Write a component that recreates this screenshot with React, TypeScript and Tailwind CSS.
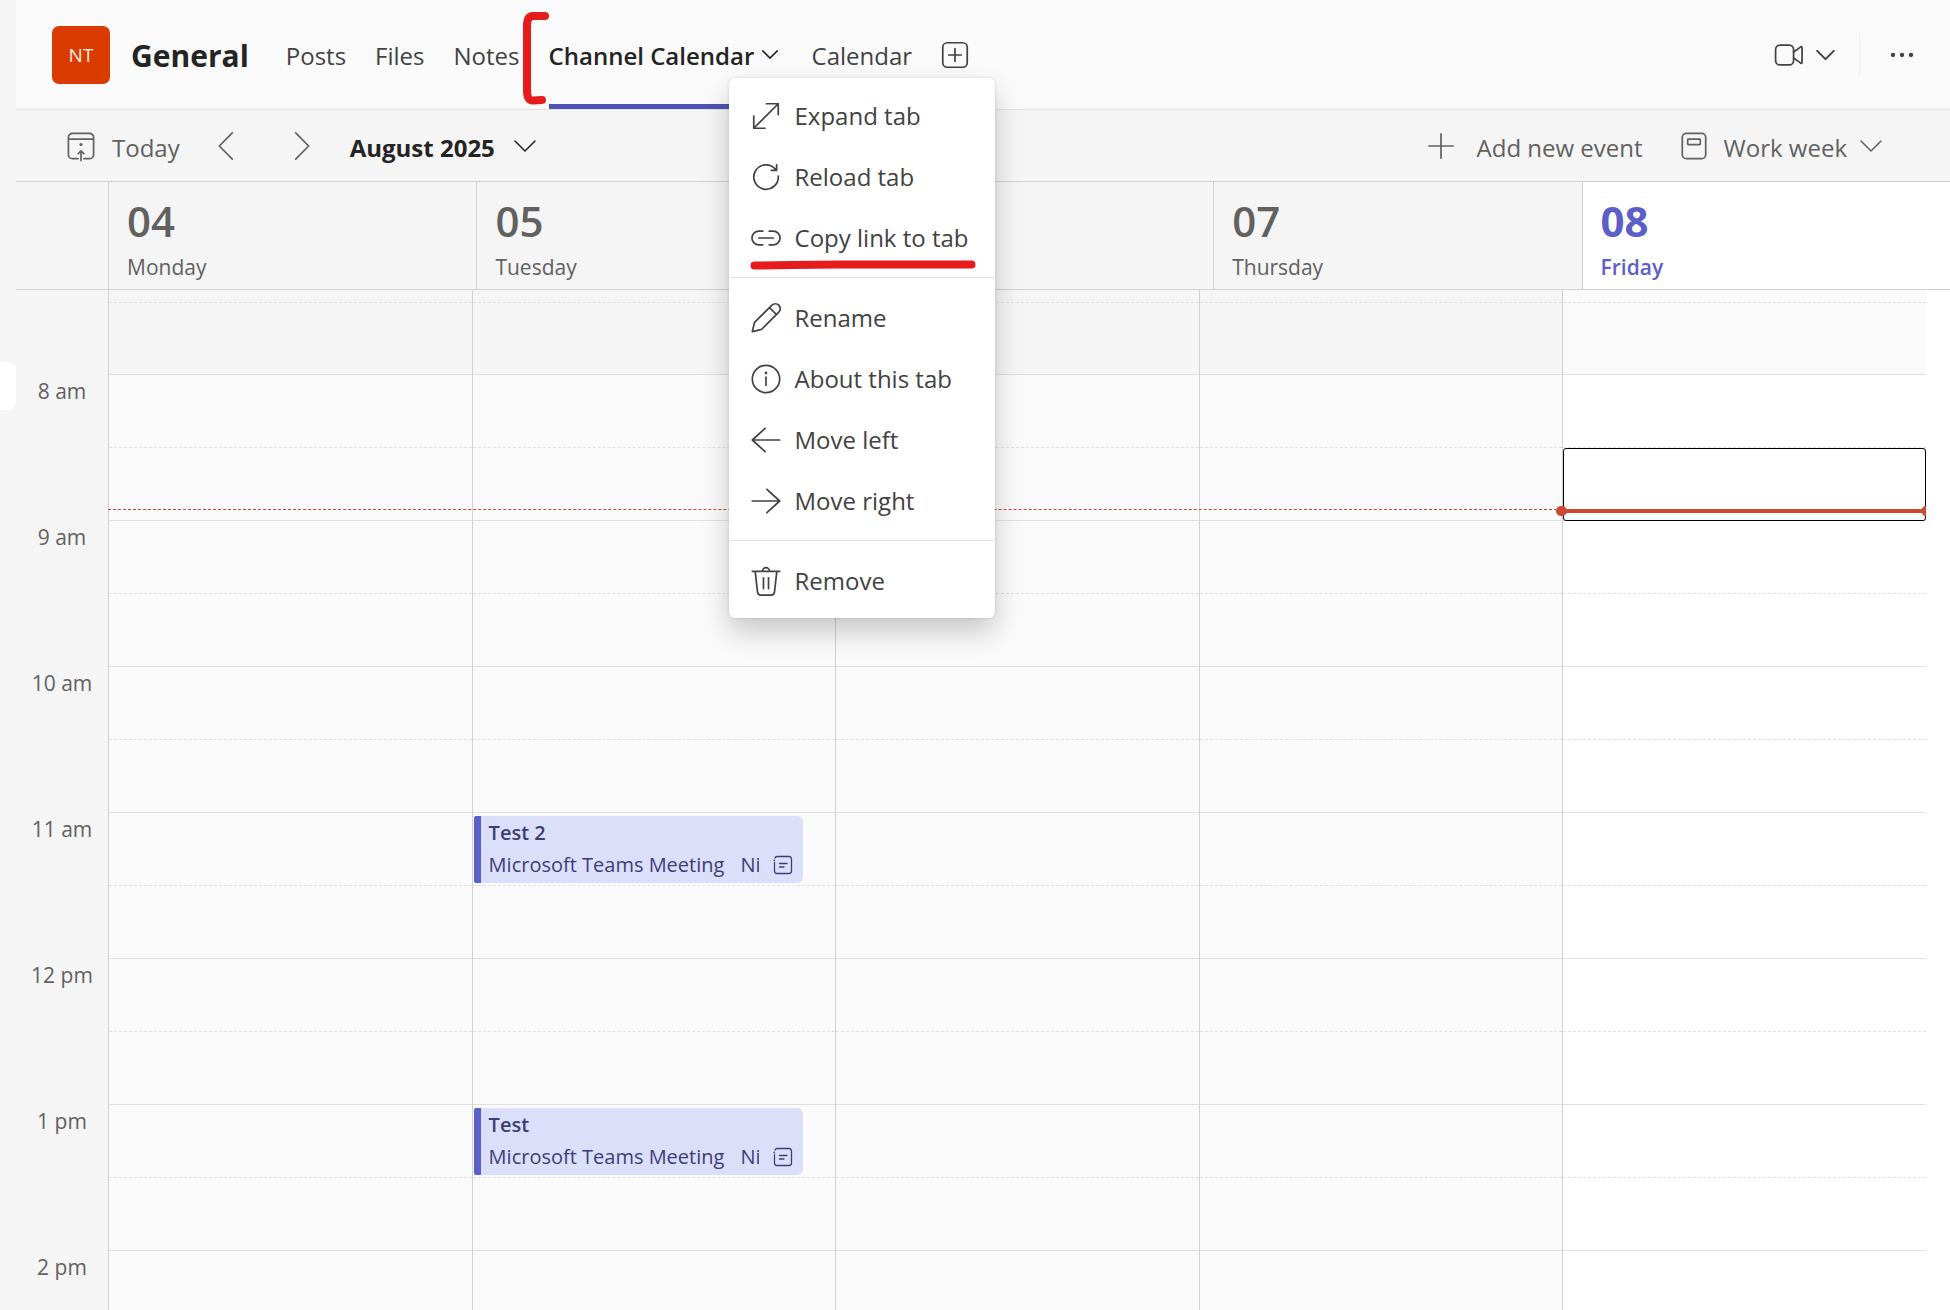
import clsx from 'clsx';
import React from 'react';

interface IconProps {
  children: React.ReactNode;
  className?: string;
}

const Icon: React.FC<IconProps> = ({ children, className = 'size-9' }) => (
  <svg
    aria-hidden="true"
    className={clsx('shrink-0', className)}
    fill="none"
    stroke="currentColor"
    strokeLinecap="round"
    strokeLinejoin="round"
    strokeWidth="0.95"
    viewBox="0 0 20 20"
  >
    {children}
  </svg>
);

const ChevronDown: React.FC<{ className: string }> = ({ className }) => (
  <svg
    aria-hidden="true"
    className={clsx('shrink-0', className)}
    fill="none"
    stroke="currentColor"
    strokeLinecap="round"
    strokeLinejoin="round"
    viewBox="0 0 22 12"
  >
    <path d="M1 1l10 10L21 1" vectorEffect="non-scaling-stroke" />
  </svg>
);

const TodayIcon = () => (
  <Icon>
    <path d="M8.400 17H5.200A2.200 2.200 0 0 1 3 14.800V5.200A2.200 2.200 0 0 1 5.200 3h9.600A2.200 2.200 0 0 1 17 5.200v9.600a2.200 2.200 0 0 1-2.200 2.200H11.600M3 6.200h14M10 18v-5M8.400 14.300L10 12.700l1.600 1.600" />
    <circle cx="10" cy="9.200" fill="currentColor" r="0.850" stroke="none" />
  </Icon>
);

const WorkWeekIcon = () => (
  <Icon>
    <rect height="14" rx="2.200" width="13" x="3.500" y="3" />
    <rect height="3" rx="0.300" width="7" x="6.500" y="6.200" />
  </Icon>
);

const NotesIcon = () => (
  <svg
    aria-hidden="true"
    className="size-5 shrink-0"
    fill="none"
    stroke="currentColor"
    strokeLinecap="round"
    strokeWidth="1.300"
    viewBox="0 0 20 20"
  >
    <path d="M1.500 7.500V16A2.500 2.500 0 0 0 4 18.500h12a2.500 2.500 0 0 0 2.500-2.500V4A2.500 2.500 0 0 0 16 1.500H4A2.500 2.500 0 0 0 2 3M6.500 8.500h7.500M6.500 12h4.500" />
    <circle cx="1.300" cy="5.300" fill="currentColor" r="0.900" stroke="none" />
  </svg>
);

const menuGroups = [
  [
    {
      label: 'Expand tab',
      icon: <path d="M3.200 16.800L16.800 3.200M10.200 3.200h6.600v6M3.200 10v6.800h6.200" />,
    },
    {
      label: 'Reload tab',
      icon: <path d="M16.800 9.500A6.800 6.800 0 1 1 14.800 5.200l1 1M15.900 3.300v3h-3" />,
    },
    {
      label: 'Copy link to tab',
      icon: (
        <path d="M8.200 6.200H6a3.800 3.800 0 0 0 0 7.600h2.200M11.800 6.200H14a3.800 3.800 0 0 1 0 7.600h-2.200M6 10h8" />
      ),
      marked: true,
    },
  ],
  [
    {
      label: 'Rename',
      icon: (
        <path d="M2.400 17.600l1.100-4.700a1.500 1.500 0 0 1 .4-.7l9.400-9.300a2.600 2.600 0 0 1 3.800 3.800l-9.300 9.400a1.500 1.500 0 0 1-.7.4zM12 4.300L15.700 8" />
      ),
    },
    {
      label: 'About this tab',
      icon: (
        <>
          <circle cx="10" cy="10" r="7.600" />
          <path d="M10 9v4.500" />
          <circle cx="10" cy="6.600" fill="currentColor" r="0.750" stroke="none" />
        </>
      ),
    },
    { label: 'Move left', icon: <path d="M17.600 10H2.400M9.500 3.500L2.400 10l7.100 6.500" /> },
    { label: 'Move right', icon: <path d="M2.400 10h15.200M10.500 3.500l7.100 6.500-7.100 6.500" /> },
  ],
  [
    {
      label: 'Remove',
      icon: (
        <path d="M2.400 4.700h15.200M8 4.600a2 2 0 0 1 4 0M4 4.800l1.300 11.400A1.800 1.800 0 0 0 7.100 17.800h5.800a1.800 1.800 0 0 0 1.800-1.600L16 4.800M8.600 8.200v6M11.400 8.200v6" />
      ),
    },
  ],
];

const TabMenu = () => (
  <div
    className="absolute top-[78px] left-[180px] z-20 w-[266px] rounded-md bg-white py-[7px] text-[#424242] shadow-[0_0_3px_rgba(0,0,0,0.14),0_14px_28px_rgba(0,0,0,0.2)]"
    role="menu"
  >
    {menuGroups.map((group, index) => (
      <React.Fragment key={group[0].label}>
        {index > 0 && <hr className="mx-px my-[9px] border-[#e0e0e0]" />}
        {group.map(({ icon, label, marked }: { icon: React.ReactNode; label: string; marked?: boolean }) => (
          <button
            className="relative flex h-[61px] w-full items-center gap-[11px] pl-[19px] text-left whitespace-nowrap"
            key={label}
            role="menuitem"
            type="button"
          >
            <Icon>{icon}</Icon>
            <span>{label}</span>
            {marked && (
              <svg
                aria-hidden="true"
                className="absolute top-[52px] left-[21px] h-3 w-[226px]"
                fill="none"
                stroke="#e61b1b"
                strokeLinecap="round"
                strokeWidth="8"
                viewBox="0 0 226 12"
              >
                <path d="M4.500 6.500C40 6.500 45 5.500 90 5.500H221.500" />
              </svg>
            )}
          </button>
        ))}
      </React.Fragment>
    ))}
  </div>
);

const Header = () => (
  <header className="flex h-[110px] items-center border-b border-[#e0e0e0] bg-[#fafafa] pr-[30px] pl-9">
    <div className="flex size-[58px] items-center justify-center rounded-[7px] bg-[#da3b01] text-[19px] text-[#fdeee9]">
      NT
    </div>
    <h1 className="ml-[21px] pt-[3px] text-[30px] font-bold text-[#242424]">General</h1>
    <nav className="ml-[37px] flex items-center gap-[29px] self-stretch text-[#424242]">
      <a className="pt-0.5" href="#posts">
        Posts
      </a>
      <a className="pt-0.5" href="#files">
        Files
      </a>
      <a className="pt-0.5" href="#notes">
        Notes
      </a>
      <div className="relative flex self-stretch">
        <a
          aria-current="page"
          className="flex w-[234px] items-center justify-between border-b-5 border-[#4f52b2] pt-[5px] pr-[5px] font-semibold whitespace-nowrap text-[#242424]"
          href="#channel-calendar"
        >
          <span className="pt-0.5">Channel Calendar</span>
          <ChevronDown className="h-[9px] w-4 stroke-[1.5px]" />
        </a>
        <svg
          aria-hidden="true"
          className="absolute top-2.5 -left-7 h-24 w-8"
          fill="none"
          stroke="#e61b1b"
          strokeLinecap="round"
          strokeWidth="8"
          viewBox="0 0 32 96"
        >
          <path d="M24 6H12Q6 6 6 16V80Q6 91 12 90.500L21 90" />
        </svg>
        <TabMenu />
      </div>
      <a className="pt-0.5" href="#calendar">
        Calendar
      </a>
      <button aria-label="Add a tab" className="-mx-1" type="button">
        <Icon>
          <rect height="13.600" rx="2.500" width="13.600" x="3.200" y="3.200" />
          <path d="M10 6.500v7M6.500 10h7" />
        </Icon>
      </button>
    </nav>
    <div className="ml-auto flex items-center text-[#424242]">
      <button aria-label="Meet now" className="flex items-center gap-2" type="button">
        <Icon>
          <rect height="11" rx="2.500" width="10" x="2" y="4.500" />
          <path d="M12 8.300l3.800-2.700a.5.5 0 0 1 .9.400v8a.5.5 0 0 1-.9.400L12 11.700" />
        </Icon>
        <ChevronDown className="h-2.5 w-[19px] stroke-[2px]" />
      </button>
      <div className="ml-6 h-[43px] w-px bg-[#f0f0f0]" />
      <button aria-label="More options" className="ml-6" type="button">
        <Icon>
          <g fill="currentColor" stroke="none">
            <circle cx="5" cy="10" r="1.200" />
            <circle cx="10" cy="10" r="1.200" />
            <circle cx="15" cy="10" r="1.200" />
          </g>
        </Icon>
      </button>
    </div>
  </header>
);

const Toolbar = () => (
  <div className="flex h-[72px] items-center border-b border-[#d1d1d1] pr-[67px] pl-[47px] text-[#616161]">
    <button className="flex items-center gap-[13px]" type="button">
      <TodayIcon />
      <span className="pt-1">Today</span>
    </button>
    <button aria-label="Previous week" className="ml-7" type="button">
      <Icon>
        <path d="M13.500 2.700L6.300 10l7.200 7.300" />
      </Icon>
    </button>
    <button aria-label="Next week" className="ml-10" type="button">
      <Icon>
        <path d="M6.500 2.700l7.200 7.300-7.200 7.300" />
      </Icon>
    </button>
    <button className="ml-[30px] flex items-center gap-[18px] font-bold text-[#242424]" type="button">
      <span className="pt-1">August 2025</span>
      <ChevronDown className="h-3 w-6 stroke-[1.5px]" />
    </button>
    <button className="ml-auto flex items-center gap-[18px]" type="button">
      <Icon>
        <path d="M10 3.300v13.400M3.300 10h13.400" />
      </Icon>
      <span className="pt-1">Add new event</span>
    </button>
    <button className="ml-[33px] flex items-center gap-3" type="button">
      <WorkWeekIcon />
      <span className="pt-1">Work week</span>
      <ChevronDown className="h-3 w-6 stroke-[1.5px]" />
    </button>
  </div>
);

const days = [
  { date: '04', name: 'Monday' },
  { date: '05', name: 'Tuesday' },
  { date: '06', name: 'Wednesday' },
  { date: '07', name: 'Thursday' },
  { date: '08', name: 'Friday', today: true },
];

const DayHeadings = () => (
  <div className="flex h-[108px] border-b border-[#d1d1d1]">
    <div className="w-[92px] shrink-0" />
    <div className="grid flex-1 grid-cols-5">
      {days.map(({ date, name, today }) => (
        <div
          className={clsx(
            'border-l border-[#d1d1d1] pt-[15px] pl-[18px]',
            today ? 'bg-white text-[#5b5fc7]' : 'text-[#616161]'
          )}
          key={date}
        >
          <div className={clsx('text-[42px] leading-[48px]', today ? 'font-bold' : 'font-semibold')}>{date}</div>
          <div className={clsx('text-[21px] leading-[44px]', today && 'font-semibold')}>{name}</div>
        </div>
      ))}
    </div>
  </div>
);

const hours = ['8 am', '9 am', '10 am', '11 am', '12 pm', '1 pm', '2 pm'];

const events = [
  { date: '05', hour: '11 am', title: 'Test 2' },
  { date: '05', hour: '1 pm', title: 'Test' },
];

const EventCard: React.FC<{ title: string }> = ({ title }) => (
  <button
    className="flex h-[67px] w-[329px] flex-col rounded-l-xs rounded-r-md border-l-7 border-[#5b5fc7] bg-[#dcdffa] pt-px pr-2.5 pl-2 text-left text-[20px] leading-8 text-[#3d3e78]"
    type="button"
  >
    <span className="font-semibold">{title}</span>
    <span className="flex items-center gap-3.5 self-stretch">
      <span className="flex min-w-0 flex-1 gap-4 overflow-hidden whitespace-nowrap">
        <span>Microsoft Teams Meeting</span>
        <span>Ni</span>
      </span>
      <NotesIcon />
    </span>
  </button>
);

const DayColumn: React.FC<{ date: string; today?: boolean }> = ({ date, today }) => (
  <div className={clsx('relative border-l border-[#d1d1d1]', today ? 'bg-white' : 'bg-[#fafafa]')}>
    <div className={today ? 'bg-[#fafafa]' : 'bg-[#f5f5f5]'}>
      <div className="h-[13px] border-b border-dashed border-[#e0e0e0]" />
      <div className="h-[72px] border-b border-[#e0e0e0]" />
    </div>
    {hours.map((hour) => (
      <React.Fragment key={hour}>
        <div className="h-[73px] border-b border-dashed border-[#e0e0e0] pt-[3px] pl-px">
          {events
            .filter((event) => event.date === date && event.hour === hour)
            .map(({ title }) => (
              <EventCard key={title} title={title} />
            ))}
        </div>
        <div className="h-[73px] border-b border-[#e0e0e0]" />
      </React.Fragment>
    ))}
    {today && (
      <>
        <div className="absolute inset-x-0 top-[158px] h-[73px] rounded-[3px] border border-black" />
        <div className="absolute inset-x-0 top-[219px] h-1 bg-[#cc4a31]" />
        <div className="absolute top-[216px] -left-[7px] h-2.5 w-[11px] rounded-full bg-[#cc4a31]" />
        <div className="absolute top-[216px] right-0 h-2.5 w-1 rounded-l-full bg-[#cc4a31]" />
      </>
    )}
  </div>
);

const WeekGrid = () => (
  <div className="flex min-h-0 flex-1 overflow-hidden">
    <div className="w-[92px] shrink-0 pt-[81px] text-center text-[21px] leading-10 text-[#616161]">
      {hours.map((hour) => (
        <div className="h-[146px]" key={hour}>
          {hour}
        </div>
      ))}
    </div>
    <div className="relative grid flex-1 grid-cols-5 self-start">
      {days.map(({ date, today }) => (
        <DayColumn date={date} key={date} today={today} />
      ))}
      <div className="absolute top-[219px] left-0 w-4/5 border-t border-dashed border-[#cc4a31]" />
    </div>
    <div className="w-6 shrink-0 bg-white" />
  </div>
);

const App: React.FC = () => (
  <div className="flex h-screen overflow-hidden bg-[#f5f5f5] font-['Segoe_UI','Open_Sans',sans-serif] text-[24px] leading-8">
    <aside className="w-4 shrink-0 pt-[362px]">
      <div className="h-12 rounded-r-lg bg-white" />
    </aside>
    <main className="flex min-w-0 flex-1 flex-col">
      <Header />
      <Toolbar />
      <DayHeadings />
      <WeekGrid />
    </main>
  </div>
);

export default App;
